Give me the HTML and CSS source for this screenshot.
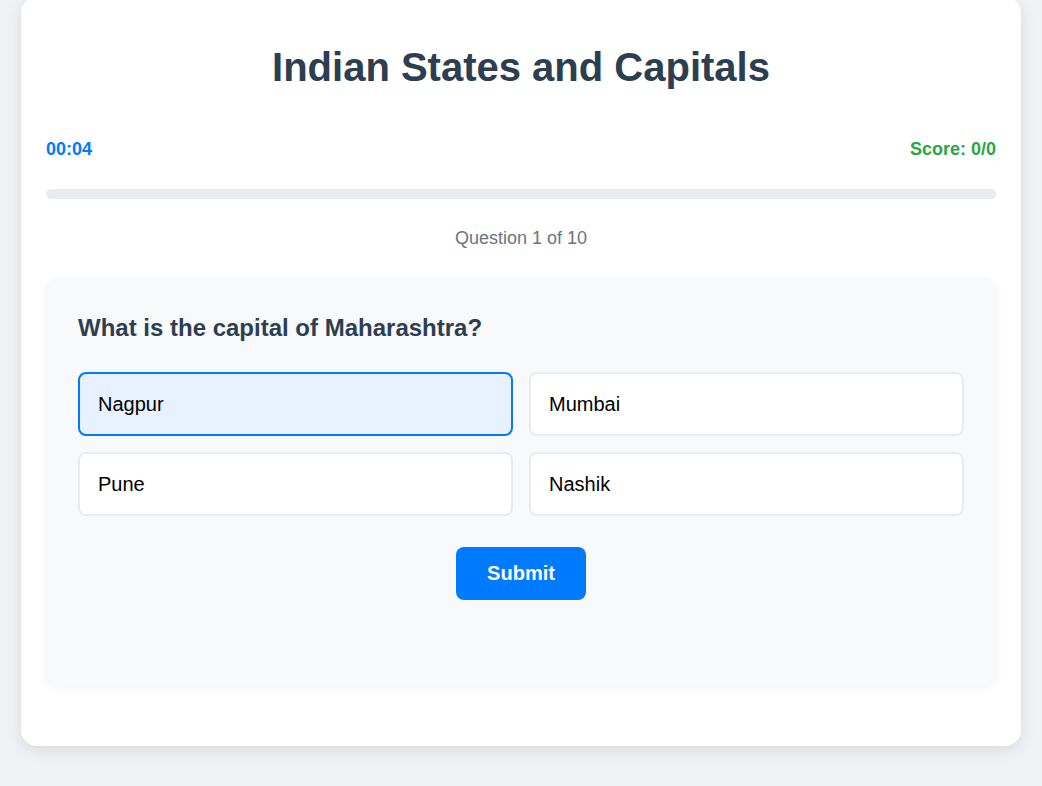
FILE: index.html
```html
<!DOCTYPE html>
<html lang="en">
<head>
<meta charset="utf-8">
<title>Indian States and Capitals</title>
<link rel="stylesheet" href="styles.css">
</head>
<body>
<div class="page">
  <div class="card">
    <h1 class="title">Indian States and Capitals</h1>
    <div class="stats">
      <span class="timer">00:04</span>
      <span class="score">Score: 0/0</span>
    </div>
    <div class="progress"><div class="progress-fill"></div></div>
    <div class="counter">Question 1 of 10</div>
    <div class="qbox">
      <h2 class="question">What is the capital of Maharashtra?</h2>
      <div class="options">
        <div class="option selected">Nagpur</div>
        <div class="option">Mumbai</div>
        <div class="option">Pune</div>
        <div class="option">Nashik</div>
      </div>
      <div class="actions">
        <button class="submit">Submit</button>
      </div>
    </div>
  </div>
</div>
</body>
</html>
```
FILE: styles.css
```css
* { box-sizing: border-box; }
html, body { margin: 0; }
body {
  background: #f0f2f5;
  font-family: "Liberation Sans", Arial, sans-serif;
  color: #2c3e50;
}
.page {
  padding: 0 21px 40px;
}
.card {
  width: 1000px;
  margin: -3px auto 0;
  background: #fff;
  border-radius: 16px;
  box-shadow: 0 4px 16px rgba(0, 0, 0, 0.1);
  padding: 25px 25px 60px;
}
.title {
  margin: 22px 0 0;
  font-size: 40px;
  line-height: 46px;
  text-align: center;
  color: #2c3e50;
  font-weight: bold;
}
.stats {
  margin-top: 49px;
  display: flex;
  justify-content: space-between;
  font-size: 18px;
  line-height: 20px;
  font-weight: bold;
}
.timer { color: #007bff; }
.score { color: #28a745; }
.progress {
  margin-top: 30px;
  height: 10px;
  background: #e9ecef;
  border-radius: 5px;
  overflow: hidden;
}
.progress-fill {
  width: 0;
  height: 100%;
  background: #007bff;
}
.counter {
  margin-top: 29px;
  text-align: center;
  color: #6c757d;
  font-size: 18px;
  line-height: 20px;
}
.qbox {
  margin-top: 30px;
  background: #f8f9fa;
  border-radius: 12px;
  box-shadow: 0 2px 8px rgba(0, 0, 0, 0.05);
  padding: 36px 32px 86px;
}
.question {
  margin: 0;
  font-size: 24px;
  line-height: 28px;
  font-weight: bold;
  color: #2c3e50;
}
.options {
  margin-top: 30px;
  display: grid;
  grid-template-columns: 1fr 1fr;
  gap: 16px;
}
.option {
  height: 64px;
  display: flex;
  align-items: center;
  padding: 0 18px;
  background: #fff;
  border: 2px solid #e9ecef;
  border-radius: 8px;
  font-size: 20px;
  color: #000;
}
.option.selected {
  border-color: #007bff;
  background: #e7f1ff;
}
.actions {
  margin-top: 31px;
  display: flex;
  justify-content: center;
}
.submit {
  width: 130px;
  height: 53px;
  border: none;
  border-radius: 8px;
  background: #007bff;
  color: #fff;
  font-family: "Liberation Sans", Arial, sans-serif;
  font-size: 20px;
  font-weight: bold;
  cursor: pointer;
}
```
